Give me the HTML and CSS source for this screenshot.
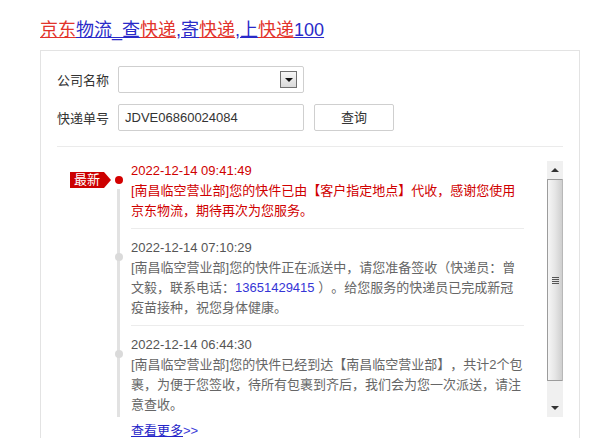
FILE: index.html
```html
<!DOCTYPE html>
<html>
<head>
<meta charset="UTF-8">
<link rel="stylesheet" href="styles.css">
</head>
<body>
  <h1 class="title"><a href="#"><em>京东</em>物流_查<em>快递</em>,寄<em>快递</em>,上<em>快递</em>100</a></h1>

  <div class="box">
    <div class="form">
      <div class="row">
        <label>公司名称</label>
        <div class="select"><span class="drop"></span></div>
      </div>
      <div class="row">
        <label>快递单号</label>
        <div class="input">JDVE06860024084</div>
        <div class="btn">查询</div>
      </div>
    </div>

    <div class="track">
      <ul class="list">
        <li class="item first">
          <div class="mark"><span class="tag">最新</span><span class="dot"></span></div>
          <div class="body">
            <div class="time">2022-12-14 09:41:49</div>
            <div class="desc">[南昌临空营业部]您的快件已由【客户指定地点】代收，感谢您使用京东物流，期待再次为您服务。</div>
          </div>
        </li>
        <li class="item">
          <div class="mark"><span class="dot"></span></div>
          <div class="body">
            <div class="time">2022-12-14 07:10:29</div>
            <div class="desc">[南昌临空营业部]您的快件正在派送中，请您准备签收（快递员：曾文毅，联系电话：<span class="phone">13651429415</span> ）。给您服务的快递员已完成新冠疫苗接种，祝您身体健康。</div>
          </div>
        </li>
        <li class="item">
          <div class="mark"><span class="dot"></span></div>
          <div class="body">
            <div class="time">2022-12-14 06:44:30</div>
            <div class="desc">[南昌临空营业部]您的快件已经到达【南昌临空营业部】，共计2个包裹，为便于您签收，待所有包裹到齐后，我们会为您一次派送，请注意查收。</div>
          </div>
        </li>
      </ul>
      <div class="scrollbar">
        <div class="sb-btn up"></div>
        <div class="sb-thumb"><span class="grip"></span></div>
        <div class="sb-rest"></div>
        <div class="sb-btn down"></div>
      </div>
    </div>

    <div class="more"><a href="#">查看更多</a><span class="arrows">&gt;&gt;</span></div>
  </div>
</body>
</html>
```

FILE: styles.css
```css
body
{
    margin: 0;
    padding: 0;
    background: #fff;
    font-family: "Liberation Sans", "Noto Sans CJK SC", sans-serif;
    font-size: 13px;
    color: #333;
    text-spacing-trim: space-all;
}

.title
{
    margin: 0;
    padding: 18px 0 0 40px;
    font-size: 18px;
    line-height: 24px;
    font-weight: normal;
}

.title a
{
    color: #2a2ac8;
    text-decoration: underline;
}

.title em
{
    font-style: normal;
    color: #e2332b;
    text-decoration: underline;
}

.box
{
    margin: 8px 0 0 40px;
    width: 506px;
    border: 1px solid #e3e3e3;
    border-bottom: none;
    padding: 15px 16px 40px;
}

/* search form */
.form
{
    border-bottom: 1px solid #ebebeb;
    padding-bottom: 15px;
}

.row
{
    display: flex;
    align-items: center;
    gap: 10px;
}

.row + .row
{
    margin-top: 11px;
}

.row label
{
    width: 51px;
    color: #333;
    white-space: nowrap;
}

.select, .input
{
    box-sizing: border-box;
    width: 186px;
    height: 27px;
    border: 1px solid #cfcfcf;
    border-radius: 2px;
    background: #fff;
}

.select
{
    display: flex;
    justify-content: flex-end;
    align-items: center;
    padding-right: 6px;
}

.drop
{
    box-sizing: border-box;
    width: 17px;
    height: 17px;
    border: 1px solid #707070;
    background: linear-gradient(#f7f7f7, #d9d9d9);
    display: flex;
    align-items: center;
    justify-content: center;
}

.drop::after
{
    content: "";
    border-top: 4px solid #111;
    border-left: 4px solid transparent;
    border-right: 4px solid transparent;
}

.input
{
    padding: 0 6px;
    line-height: 25px;
    color: #333;
}

.btn
{
    box-sizing: border-box;
    width: 80px;
    height: 27px;
    border: 1px solid #cfcfcf;
    border-radius: 2px;
    text-align: center;
    line-height: 25px;
    color: #333;
}

/* timeline */
.track
{
    display: flex;
    height: 256px;
    margin-top: 14px;
}

.list
{
    flex: 1;
    margin: 0;
    padding: 0;
    list-style: none;
    overflow: hidden;
    line-height: 20px;
}

.item
{
    display: flex;
}

.mark
{
    width: 74px;
    flex: none;
    box-sizing: border-box;
    display: flex;
    align-items: flex-start;
    padding: 24px 0 0 58px;
    background: linear-gradient(#e2e2e2, #e2e2e2) no-repeat 60px 0 / 3px 100%;
}

.first .mark
{
    padding: 11px 0 0 13px;
    background-position: 60px 28px;
}

.dot
{
    width: 8px;
    height: 8px;
    border-radius: 50%;
    background: #dadada;
    flex: none;
}

.first .dot
{
    background: #d40000;
    margin: 4px 0 0 11px;
}

.tag
{
    position: relative;
    flex: none;
    height: 16px;
    padding: 0 4px;
    background: #cc0000;
    color: #fff;
    font-size: 13px;
    line-height: 16px;
}

.tag::after
{
    content: "";
    position: absolute;
    left: 100%;
    top: 0;
    border-left: 7px solid #cc0000;
    border-top: 8px solid transparent;
    border-bottom: 8px solid transparent;
}

.body
{
    flex: 1;
    margin-right: 23px;
    padding: 9px 0 7px;
    border-bottom: 1px solid #ececec;
}

.first .body
{
    padding-top: 0;
}

.time
{
    color: #555;
}

.desc
{
    color: #666;
}

.first .time, .first .desc
{
    color: #d00000;
}

.phone
{
    color: #3535d6;
}

/* fake classic scrollbar */
.scrollbar
{
    width: 16px;
    flex: none;
    display: flex;
    flex-direction: column;
    background: #f0f0f0;
}

.sb-btn
{
    height: 18px;
    display: flex;
    align-items: center;
    justify-content: center;
    background: #f0f0f0;
}

.sb-btn.up::after
{
    content: "";
    border-bottom: 4px solid #333;
    border-left: 4px solid transparent;
    border-right: 4px solid transparent;
}

.sb-btn.down::after
{
    content: "";
    border-top: 4px solid #333;
    border-left: 4px solid transparent;
    border-right: 4px solid transparent;
}

.sb-thumb
{
    height: 202px;
    box-sizing: border-box;
    border: 1px solid #9c9c9c;
    border-right-color: #b8b8b8;
    border-radius: 1px;
    background: linear-gradient(to right, #f6f6f6, #e6e6e6 50%, #cfcfcf);
    display: flex;
    align-items: center;
    justify-content: center;
}

.grip
{
    width: 7px;
    height: 7px;
    background: repeating-linear-gradient(#555 0 1px, transparent 1px 2px);
}

.sb-rest
{
    flex: 1;
}

.more
{
    margin: 4px 0 0 74px;
    line-height: 20px;
}

.more a
{
    color: #2424c8;
    text-decoration: underline;
}

.arrows
{
    color: #3b3bd8;
}
```
